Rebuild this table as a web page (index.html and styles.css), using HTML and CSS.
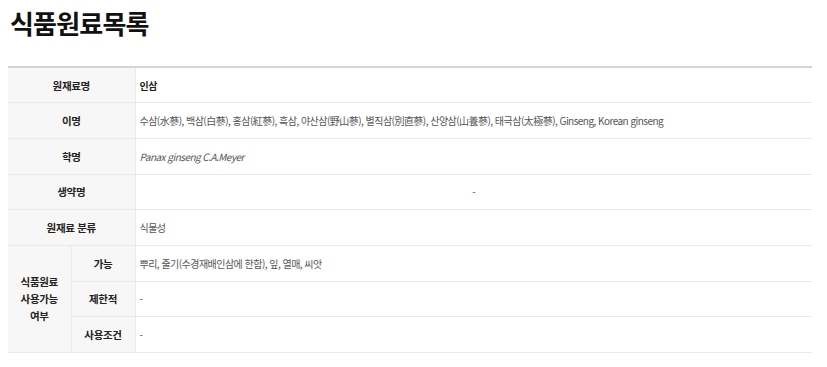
FILE: index.html
```html
<!DOCTYPE html>
<html lang="ko">
<head>
<meta charset="utf-8">
<link rel="stylesheet" href="styles.css">
</head>
<body>
<h1 class="title">식품원료목록</h1>
<table class="info">
  <colgroup>
    <col class="c1"><col class="c2"><col class="c3">
  </colgroup>
  <tr><th colspan="2">원재료명</th><td class="strong">인삼</td></tr>
  <tr><th colspan="2">이명</th><td>수삼(水蔘), 백삼(白蔘), 홍삼(紅蔘), 흑삼, 야산삼(野山蔘), 별직삼(別直蔘), 산양삼(山養蔘), 태극삼(太極蔘), Ginseng, Korean ginseng</td></tr>
  <tr><th colspan="2">학명</th><td><em>Panax ginseng C.A.Meyer</em></td></tr>
  <tr><th colspan="2">생약명</th><td class="center">-</td></tr>
  <tr><th colspan="2">원재료 분류</th><td>식물성</td></tr>
  <tr><th rowspan="3" class="group">식품원료<br>사용가능<br>여부</th><th class="sub">가능</th><td>뿌리, 줄기(수경재배인삼에 한함), 잎, 열매, 씨앗</td></tr>
  <tr><th class="sub">제한적</th><td>-</td></tr>
  <tr><th class="sub">사용조건</th><td>-</td></tr>
</table>
</body>
</html>
```
FILE: styles.css
```css
html, body {
  margin: 0;
  padding: 0;
  background: #fff;
}
body {
  padding: 0 15px 0 8px;
  font-family: "Noto Sans CJK KR", "Noto Sans", sans-serif;
  color: #333;
}
.title {
  margin: 5px 0 0 2px;
  font-size: 26px;
  line-height: 36px;
  font-weight: 700;
  letter-spacing: -0.8px;
  color: #111;
}
.info {
  margin-top: 25px;
  width: 804px;
  border-collapse: collapse;
  table-layout: fixed;
  border-top: 2px solid #d4d4d4;
  font-size: 10.5px;
}
.c1 { width: 63px; }
.c2 { width: 64px; }
.info tr { height: 35.7px; }
.info th, .info td {
  border-bottom: 1px solid #e9e9e9;
  padding: 0 4px;
  vertical-align: middle;
}
.info th {
  background: #f7f7f7;
  font-weight: 700;
  color: #222;
  text-align: center;
  border-right: 1px solid #ececec;
  letter-spacing: -0.3px;
}
.info th.group {
  line-height: 17px;
}
.info td {
  color: #555;
  text-align: left;
  white-space: nowrap;
  font-size: 10px;
  letter-spacing: -0.53px;
}
.info td.strong {
  font-weight: 700;
  color: #222;
}
.info td.center { text-align: center; }
.info em { font-style: italic; }
```
